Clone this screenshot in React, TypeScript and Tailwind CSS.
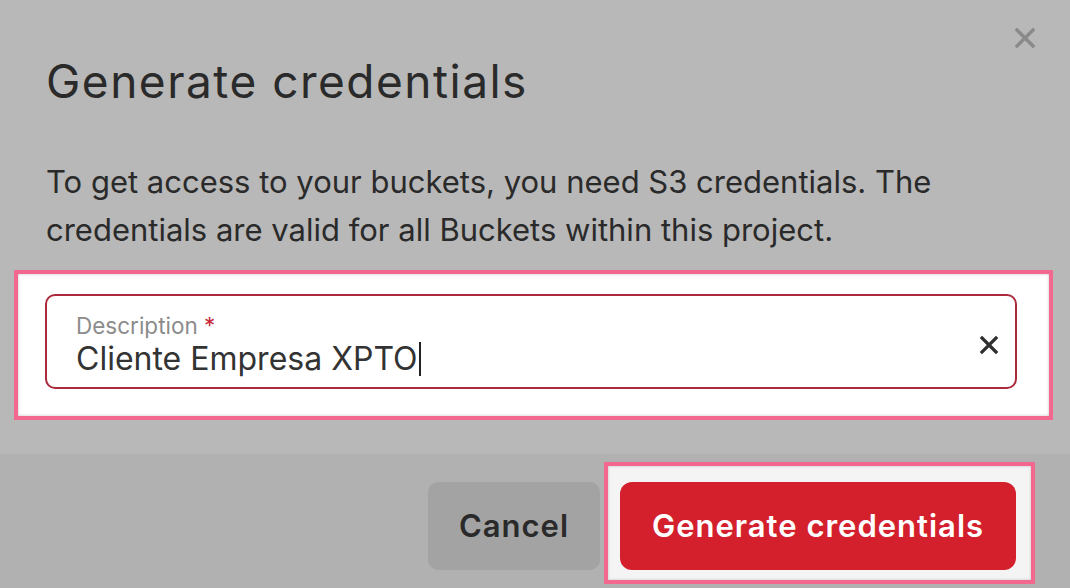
export default function App() {
  return (
    <div className="relative flex h-[588px] w-[1070px] flex-col overflow-hidden bg-[#b8b8b8] font-['Inter',sans-serif] text-[#2a2a2a]">
      <button className="absolute left-[1015px] top-[28px] h-[20px] w-[20px]" aria-label="Close">
        <svg viewBox="0 0 20 20" className="h-[20px] w-[20px]">
          <path d="M2 2 L18 18 M18 2 L2 18" stroke="#8a8a8a" strokeWidth="3.4" strokeLinecap="square" />
        </svg>
      </button>

      <div className="pl-[46px]">
        <h2 className="pt-[57px] text-[46px] font-normal leading-[48px] tracking-[1.5px]">Generate credentials</h2>
        <p className="mt-[53px] w-[920px] text-[31px] leading-[48px]">
          To get access to your buckets, you need S3 credentials. The credentials are valid for all Buckets within this project.
        </p>
      </div>

      <div className="mt-[16px] ml-[14px] w-[1039px] border-4 border-[#f2688f] bg-white pt-[20px] pb-[27px] pl-[27px] pr-[32px] shadow-[inset_0_0_3px_rgba(0,0,0,0.25)]">
        <div className="flex items-center rounded-[10px] border-2 border-[#ab2a3b] pt-[18px] pb-[11px] pl-[29px] pr-[16px]">
          <div className="flex-1">
            <div className="text-[22.5px] leading-[24px] text-[#8c8c8c]">
              Description <span className="text-[#c8283a]">*</span>
            </div>
            <div className="mt-[4px] flex items-center text-[32px] leading-[34px] text-[#333333]">
              Cliente Empresa XPTO
              <span className="ml-[1px] inline-block h-[34px] w-[2px] bg-[#222222]" />
            </div>
          </div>
          <svg viewBox="0 0 20 20" className="h-[20px] w-[20px]">
            <path d="M3 3 L17 17 M17 3 L3 17" stroke="#2f2f2f" strokeWidth="3.2" strokeLinecap="square" />
          </svg>
        </div>
      </div>

      <div className="mt-[34px] flex flex-1 items-start justify-end bg-[#b1b1b1] pt-[8px] pr-[35px]">
        <button className="mt-[20px] flex h-[88px] w-[172px] items-center justify-center rounded-[10px] bg-[#a3a3a3] text-[31px] font-semibold tracking-[1px] text-[#2a2a2a]">
          Cancel
        </button>
        <div className="ml-[4px] border-4 border-[#f2688f] bg-[#f4f4f4] pt-[16px] pb-[10px] pl-[12px] pr-[15px] shadow-[inset_0_0_3px_rgba(0,0,0,0.2)]">
          <button className="flex h-[88px] w-[396px] items-center justify-center rounded-[12px] bg-[#d41f2d] text-[31px] font-semibold tracking-[1px] text-white">
            Generate credentials
          </button>
        </div>
      </div>
    </div>
  );
}
